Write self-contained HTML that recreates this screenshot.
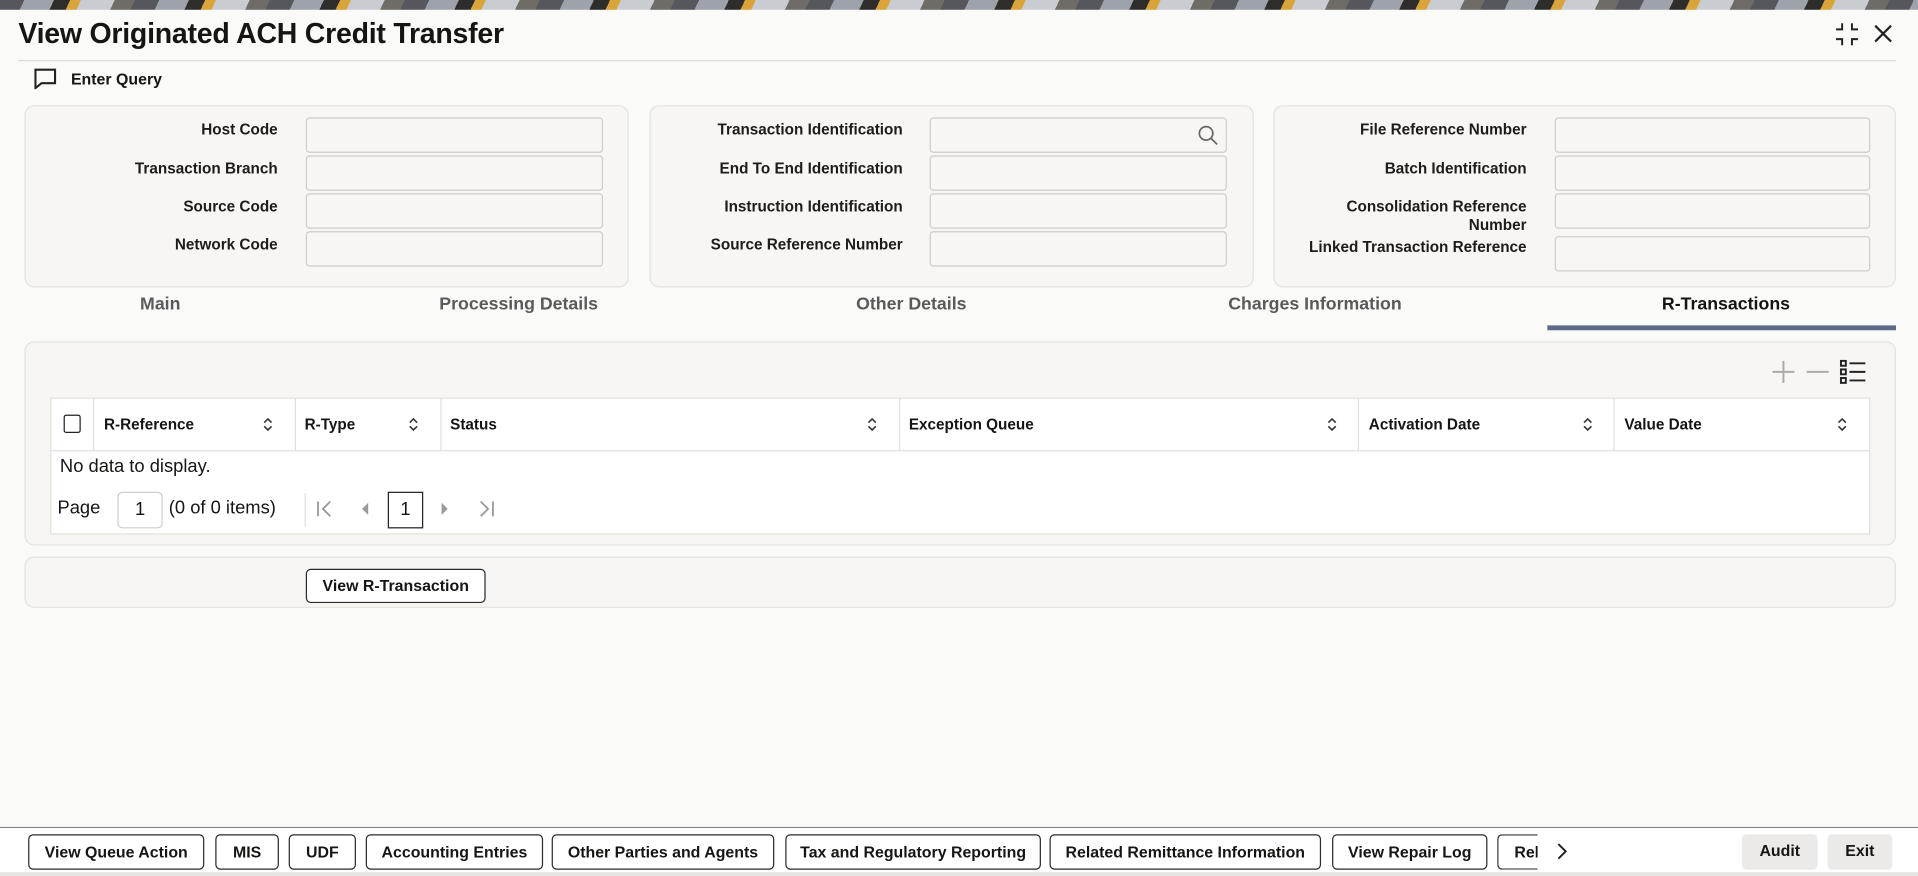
<!DOCTYPE html>
<html><head><meta charset="utf-8"><style>
html,body{margin:0;padding:0;width:1918px;height:876px;overflow:hidden;background:#fafaf9;}
#w{position:absolute;left:0;top:0;width:1568px;height:716px;transform:scale(1.22321);transform-origin:0 0;font-family:"Liberation Sans",sans-serif;color:#161513;}
.a{position:absolute;}
.banner{left:0;top:0;width:1568px;height:8px;background:repeating-linear-gradient(115deg,#55575c 0 18px,#9ea3ab 18px 40px,#2f2d2b 40px 52px,#d9a43a 52px 60px,#c9ccd1 60px 85px,#6f6b66 85px 100px);}
.panel{background:#f7f6f4;border:1px solid #e4e2de;border-radius:8px;box-sizing:border-box;}
.lbl{font-size:12.5px;font-weight:bold;text-align:right;width:220px;line-height:15px;color:#1d1c1a;}
.inp{background:#f7f6f4;border:1px solid #cfcdc9;border-radius:3px;box-sizing:border-box;height:29px;}
.tab{font-size:14.5px;font-weight:bold;color:#5a5a5a;top:241px;transform:translateX(-50%);white-space:nowrap;}
.th{font-size:12.5px;font-weight:bold;top:340px;}
.btn{top:682px;height:29px;border:1px solid #2a2a2a;border-radius:4px;box-sizing:border-box;background:#fff;font-size:13px;font-weight:bold;line-height:27px;text-align:center;white-space:nowrap;overflow:hidden;}
.vl{width:1px;background:#e2e0dc;}
</style></head><body><div id="w">
<div class="a banner"></div>
<div class="a" style="left:15px;top:14px;font-size:23.3px;font-weight:bold;letter-spacing:-0.2px">View Originated ACH Credit Transfer</div>
<svg class="a" style="left:1500px;top:18px" width="20" height="20" viewBox="0 0 20 20" fill="none" stroke="#222" stroke-width="1.6"><path d="M6 1v5H1M14 1v5h5M6 19v-5H1M14 19v-5h5"/></svg>
<svg class="a" style="left:1531px;top:19px" width="17" height="17" viewBox="0 0 17 17" stroke="#222" stroke-width="1.8"><path d="M2 2l13 13M15 2L2 15"/></svg>
<div class="a" style="left:15px;top:49px;width:1535px;height:1px;background:#dcdad6"></div>
<svg class="a" style="left:27px;top:55px" width="20" height="18" viewBox="0 0 20 18" fill="none" stroke="#222" stroke-width="1.7"><path d="M2 2h16v11H7l-5 4z"/></svg>
<div class="a" style="left:58px;top:57px;font-size:13px;font-weight:bold">Enter Query</div>

<div class="a panel" style="left:20px;top:86px;width:494px;height:149px"></div>
<div class="a panel" style="left:531px;top:86px;width:494px;height:149px"></div>
<div class="a panel" style="left:1041px;top:86px;width:509px;height:149px"></div>

<div class="a lbl" style="left:7px;top:99px">Host Code</div>
<div class="a lbl" style="left:7px;top:131px">Transaction Branch</div>
<div class="a lbl" style="left:7px;top:162px">Source Code</div>
<div class="a lbl" style="left:7px;top:193px">Network Code</div>
<div class="a inp" style="left:250px;top:96px;width:243px"></div>
<div class="a inp" style="left:250px;top:127px;width:243px"></div>
<div class="a inp" style="left:250px;top:158px;width:243px"></div>
<div class="a inp" style="left:250px;top:189px;width:243px"></div>

<div class="a lbl" style="left:518px;top:99px">Transaction Identification</div>
<div class="a lbl" style="left:518px;top:131px">End To End Identification</div>
<div class="a lbl" style="left:518px;top:162px">Instruction Identification</div>
<div class="a lbl" style="left:518px;top:193px">Source Reference Number</div>
<div class="a inp" style="left:760px;top:96px;width:243px"></div>
<svg class="a" style="left:979px;top:102px" width="17" height="17" viewBox="0 0 17 17" fill="none" stroke="#666" stroke-width="1.4"><circle cx="7" cy="7" r="5.5"/><path d="M11 11l5 5"/></svg>
<div class="a inp" style="left:760px;top:127px;width:243px"></div>
<div class="a inp" style="left:760px;top:158px;width:243px"></div>
<div class="a inp" style="left:760px;top:189px;width:243px"></div>

<div class="a lbl" style="left:1028px;top:99px">File Reference Number</div>
<div class="a lbl" style="left:1028px;top:131px">Batch Identification</div>
<div class="a lbl" style="left:1028px;top:162px">Consolidation Reference<br>Number</div>
<div class="a lbl" style="left:1028px;top:195px">Linked Transaction Reference</div>
<div class="a inp" style="left:1271px;top:96px;width:258px"></div>
<div class="a inp" style="left:1271px;top:127px;width:258px"></div>
<div class="a inp" style="left:1271px;top:158px;width:258px"></div>
<div class="a inp" style="left:1271px;top:193px;width:258px"></div>

<div class="a tab" style="left:131px">Main</div>
<div class="a tab" style="left:424px">Processing Details</div>
<div class="a tab" style="left:745px">Other Details</div>
<div class="a tab" style="left:1075px">Charges Information</div>
<div class="a tab" style="left:1411px;color:#161513">R-Transactions</div>
<div class="a" style="left:1265px;top:266px;width:285px;height:4px;background:#5f6a8a"></div>

<div class="a panel" style="left:20px;top:279px;width:1530px;height:167px"></div>
<svg class="a" style="left:1448px;top:294px" width="20" height="20" viewBox="0 0 20 20" stroke="#aaa" stroke-width="1.6"><path d="M10 1v18M1 10h18"/></svg>
<svg class="a" style="left:1476px;top:294px" width="20" height="20" viewBox="0 0 20 20" stroke="#aaa" stroke-width="1.6"><path d="M1 10h18"/></svg>
<svg class="a" style="left:1504px;top:294px" width="22" height="20" viewBox="0 0 22 20" fill="none" stroke="#222" stroke-width="1.6"><rect x="1" y="1" width="4" height="4"/><rect x="1" y="8" width="4" height="4"/><rect x="1" y="15" width="4" height="4"/><path d="M8 3h13M8 10h13M8 17h13"/></svg>

<div class="a" style="left:41px;top:325px;width:1488px;height:112px;background:#fff;border:1px solid #e2e0dc;box-sizing:border-box"></div>
<div class="a" style="left:41px;top:368px;width:1488px;height:1px;background:#e2e0dc"></div>
<div class="a vl" style="left:76px;top:325px;height:43px"></div>
<div class="a vl" style="left:241px;top:325px;height:43px"></div>
<div class="a vl" style="left:360px;top:325px;height:43px"></div>
<div class="a vl" style="left:735px;top:325px;height:43px"></div>
<div class="a vl" style="left:1110px;top:325px;height:43px"></div>
<div class="a vl" style="left:1319px;top:325px;height:43px"></div>
<div class="a" style="left:52px;top:339px;width:14px;height:15px;border:1.5px solid #222;border-radius:2px;box-sizing:border-box"></div>
<div class="a th" style="left:85px">R-Reference</div>
<div class="a th" style="left:249px">R-Type</div>
<div class="a th" style="left:368px">Status</div>
<div class="a th" style="left:743px">Exception Queue</div>
<div class="a th" style="left:1119px">Activation Date</div>
<div class="a th" style="left:1328px">Value Date</div>
<svg width="0" height="0" style="position:absolute"><defs><symbol id="s" viewBox="0 0 8 12"><path d="M1 4.5l3-3 3 3M1 7.5l3 3 3-3" fill="none" stroke="#333" stroke-width="1.3"/></symbol></defs></svg>
<svg class="a" style="left:215px;top:341px" width="8" height="12"><use href="#s"/></svg>
<svg class="a" style="left:334px;top:341px" width="8" height="12"><use href="#s"/></svg>
<svg class="a" style="left:709px;top:341px" width="8" height="12"><use href="#s"/></svg>
<svg class="a" style="left:1085px;top:341px" width="8" height="12"><use href="#s"/></svg>
<svg class="a" style="left:1294px;top:341px" width="8" height="12"><use href="#s"/></svg>
<svg class="a" style="left:1502px;top:341px" width="8" height="12"><use href="#s"/></svg>

<div class="a" style="left:49px;top:373px;font-size:15px">No data to display.</div>
<div class="a" style="left:47px;top:407px;font-size:15px">Page</div>
<div class="a" style="left:96px;top:402px;width:37px;height:30px;border:1px solid #cfcdc9;border-radius:4px;box-sizing:border-box;text-align:center;line-height:28px;font-size:15px">1</div>
<div class="a" style="left:138px;top:407px;font-size:15px">(0 of 0 items)</div>
<div class="a vl" style="left:249px;top:403px;height:28px"></div>
<svg class="a" style="left:258px;top:409px" width="16" height="14" viewBox="0 0 16 14" fill="none" stroke="#999" stroke-width="1.5"><path d="M2 1v12M12 1L6 7l6 6"/></svg>
<svg class="a" style="left:295px;top:410px" width="8" height="12" viewBox="0 0 8 12"><path d="M6 1L1 6l5 5z" fill="#999"/></svg>
<div class="a" style="left:317px;top:402px;width:29px;height:30px;border:1px solid #222;box-sizing:border-box;text-align:center;line-height:28px;font-size:15px">1</div>
<svg class="a" style="left:359px;top:410px" width="8" height="12" viewBox="0 0 8 12"><path d="M2 1l5 5-5 5z" fill="#999"/></svg>
<svg class="a" style="left:389px;top:409px" width="16" height="14" viewBox="0 0 16 14" fill="none" stroke="#999" stroke-width="1.5"><path d="M4 1l6 6-6 6M14 1v12"/></svg>

<div class="a panel" style="left:20px;top:455px;width:1530px;height:42px"></div>
<div class="a btn" style="left:250px;top:465px;width:147px;height:28px;line-height:26px">View R-Transaction</div>

<div class="a" style="left:0;top:676px;width:1568px;height:1px;background:#888"></div>
<div class="a" style="left:0;top:677px;width:1568px;height:36px;background:#fff"></div>
<div class="a" style="left:0;top:713px;width:1568px;height:3px;background:#e6e5e3"></div>
<div class="a btn" style="left:23px;width:144px">View Queue Action</div>
<div class="a btn" style="left:176px;width:52px">MIS</div>
<div class="a btn" style="left:236px;width:55px">UDF</div>
<div class="a btn" style="left:299px;width:145px">Accounting Entries</div>
<div class="a btn" style="left:451px;width:182px">Other Parties and Agents</div>
<div class="a btn" style="left:642px;width:209px">Tax and Regulatory Reporting</div>
<div class="a btn" style="left:858px;width:222px">Related Remittance Information</div>
<div class="a btn" style="left:1089px;width:127px">View Repair Log</div>
<div class="a btn" style="left:1224px;width:33px;text-align:left;padding-left:13px;border-right:none;border-radius:4px 0 0 4px">Rel</div>
<svg class="a" style="left:1272px;top:689px" width="10" height="14" viewBox="0 0 10 14" fill="none" stroke="#222" stroke-width="1.6"><path d="M2 1l6 6-6 6"/></svg>
<div class="a btn" style="left:1424px;width:62px;background:#ebeae8;border:none">Audit</div>
<div class="a btn" style="left:1494px;width:53px;background:#ebeae8;border:none">Exit</div>
</div></body></html>
